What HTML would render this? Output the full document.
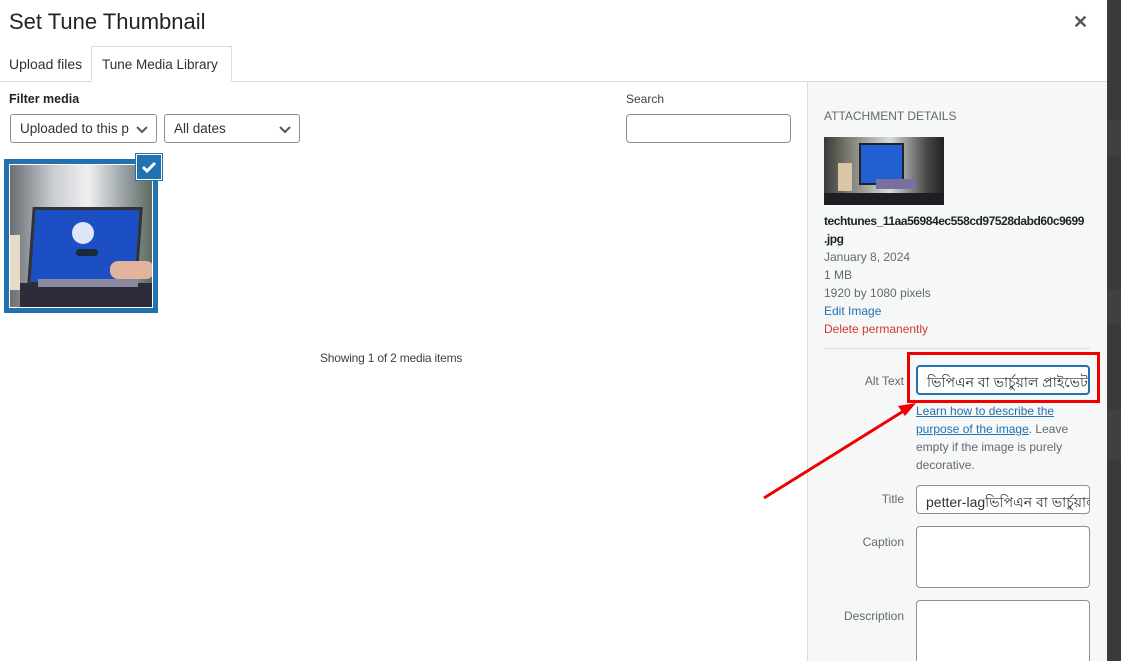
<!DOCTYPE html>
<html><head><meta charset="utf-8"><style>
*{box-sizing:border-box;margin:0;padding:0}
body{width:1121px;height:661px;overflow:hidden;background:#fff;font-family:"Liberation Sans",sans-serif;color:#3c434a;position:relative;font-size:13px}
.a{position:absolute}
.sel{border:1px solid #8c8f94;border-radius:3px;background:#fff;height:29px;font-size:14px;color:#2c3338;padding:6px 9px;white-space:nowrap;overflow:hidden}
.chev{position:absolute;right:7px;top:7px}
.lbl{font-size:12px;color:#646970;text-align:right;width:88px}
.inp{border:1px solid #8c8f94;border-radius:4px;background:#fff}
</style></head><body>
<div class="a" style="left:1107px;top:0;width:14px;height:661px;background:#3a3a3a"></div>
<div class="a" style="left:1107px;top:120px;width:14px;height:35px;background:#404040"></div>
<div class="a" style="left:1107px;top:290px;width:14px;height:35px;background:#404040"></div>
<div class="a" style="left:1107px;top:410px;width:14px;height:50px;background:#404040"></div>

<div class="a" style="left:9px;top:9px;font-size:22px;color:#1d2327">Set Tune Thumbnail</div>
<div class="a" style="left:1073px;top:12px;font-size:18px;color:#50575e;font-weight:bold">✕</div>

<div class="a" style="left:0;top:81px;width:1107px;height:1px;background:#dcdcde"></div>
<div class="a" style="left:9px;top:56px;font-size:14px;color:#2c3338;white-space:nowrap">Upload files</div>
<div class="a" style="left:91px;top:46px;width:141px;height:36px;border:1px solid #dcdcde;border-bottom:1px solid #fff;background:#fff;font-size:13.5px;color:#2c3338;padding:10px 0 0 10px;white-space:nowrap">Tune Media Library</div>

<div class="a" style="left:9px;top:92px;font-size:12.5px;color:#1d2327;font-weight:bold">Filter media</div>
<div class="a sel" style="left:10px;top:114px;width:147px;font-size:13.5px">Uploaded to this p<svg class="chev" width="14" height="14" viewBox="0 0 14 14" style="background:#fff"><path d="M2 5l5 5 5-5" fill="none" stroke="#50575e" stroke-width="2"/></svg></div>
<div class="a sel" style="left:164px;top:114px;width:136px;font-size:13.5px">All dates<svg class="chev" width="14" height="14" viewBox="0 0 14 14"><path d="M2 5l5 5 5-5" fill="none" stroke="#50575e" stroke-width="2"/></svg></div>

<div class="a" style="left:626px;top:92px;font-size:12px;color:#3c434a">Search</div>
<div class="a inp" style="left:626px;top:114px;width:165px;height:29px"></div>

<div class="a" style="left:4px;top:159px;width:154px;height:154px;background:#2271b1;padding:5px">
 <div style="width:144px;height:144px;border:1px solid #fff;position:relative;overflow:hidden;background:linear-gradient(90deg,#6a6e72 0%,#c9ccd0 30%,#eef0f0 55%,#9aa2a6 80%,#5f6a60 100%)">
  <div class="a" style="left:20px;top:42px;width:110px;height:78px;background:#1c4fc4;transform:skewX(-4deg);border:3px solid #333"></div>
  <div class="a" style="left:62px;top:57px;width:22px;height:22px;border-radius:50%;background:#dfe7f6"></div>
  <div class="a" style="left:66px;top:84px;width:22px;height:7px;border-radius:4px;background:#1a2a3a"></div>
  <div class="a" style="left:10px;top:118px;width:134px;height:26px;background:#2c2c3a"></div>
  <div class="a" style="left:28px;top:114px;width:100px;height:8px;background:#8888a0"></div>
  <div class="a" style="left:100px;top:96px;width:44px;height:18px;background:#e2b49c;border-radius:8px"></div>
  <div class="a" style="left:0;top:70px;width:10px;height:55px;background:#e8dcc8"></div>
 </div>
</div>
<div class="a" style="left:136px;top:154px;width:26px;height:26px;background:#2271b1;border:1px solid #fff;box-shadow:0 0 0 1px #2271b1"><svg width="24" height="24" viewBox="0 0 24 24"><path d="M6 12l4 4 8-8" fill="none" stroke="#fff" stroke-width="3"/></svg></div>

<div class="a" style="left:320px;top:351px;font-size:12px;color:#3c434a;letter-spacing:-0.2px">Showing 1 of 2 media items</div>

<div class="a" style="left:807px;top:82px;width:300px;height:579px;background:#f6f7f7;border-left:1px solid #dcdcde"></div>
<div class="a" style="left:824px;top:109px;font-size:12px;color:#646970">ATTACHMENT DETAILS</div>
<div class="a" style="left:824px;top:137px;width:120px;height:68px;overflow:hidden;background:linear-gradient(90deg,#3a3a38 0%,#7a7a70 20%,#d8dcdc 55%,#4a4a48 85%,#222 100%)">
  <div class="a" style="left:35px;top:6px;width:45px;height:42px;background:#2060d0;border:2px solid #222"></div>
  <div class="a" style="left:14px;top:26px;width:14px;height:28px;background:#d8c6a6"></div>
  <div class="a" style="left:0;top:56px;width:120px;height:12px;background:#1e1e24"></div>
  <div class="a" style="left:52px;top:42px;width:40px;height:10px;background:#7a70a0"></div>
</div>
<div class="a" style="left:824px;top:212px;font-size:12px;color:#1d2327;font-weight:bold;line-height:18px;width:280px;letter-spacing:-0.45px">techtunes_11aa56984ec558cd97528dabd60c9699<br>.jpg</div>
<div class="a" style="left:824px;top:248px;font-size:12px;color:#646970;line-height:18px">January 8, 2024<br>1 MB<br>1920 by 1080 pixels<br><span style="color:#2271b1">Edit Image</span><br><span style="color:#d63638">Delete permanently</span></div>
<div class="a" style="left:824px;top:348px;width:266px;height:1px;background:#dcdcde"></div>

<div class="a lbl" style="left:816px;top:374px">Alt Text</div>
<div class="a" style="left:907px;top:352px;width:193px;height:51px;border:3px solid #e00"></div>
<div class="a inp" style="left:916px;top:365px;width:174px;height:30px;border:2px solid #2271b1;padding:4px 9px;font-size:14px;color:#2c3338;white-space:nowrap;overflow:hidden">ভিপিএন বা ভার্চুয়াল প্রাইভেট</div>
<div class="a" style="left:916px;top:402px;width:170px;font-size:12px;line-height:18px;color:#646970"><span style="color:#2271b1;text-decoration:underline">Learn how to describe the purpose of the image</span>. Leave empty if the image is purely decorative.</div>

<svg class="a" style="left:760px;top:395px" width="160" height="110" viewBox="0 0 160 110"><path d="M4 103L150 12" stroke="#e00" stroke-width="3"/><path d="M156 8l-18 3 7 10z" fill="#e00"/></svg>

<div class="a lbl" style="left:816px;top:492px">Title</div>
<div class="a inp" style="left:916px;top:485px;width:174px;height:29px;padding:5px 9px;font-size:14px;color:#2c3338;white-space:nowrap;overflow:hidden">petter-lagভিপিএন বা ভার্চুয়াল</div>
<div class="a lbl" style="left:816px;top:535px">Caption</div>
<div class="a inp" style="left:916px;top:526px;width:174px;height:62px"></div>
<div class="a lbl" style="left:816px;top:609px">Description</div>
<div class="a inp" style="left:916px;top:600px;width:174px;height:61px;border-bottom:none;border-radius:4px 4px 0 0"></div>
</body></html>
